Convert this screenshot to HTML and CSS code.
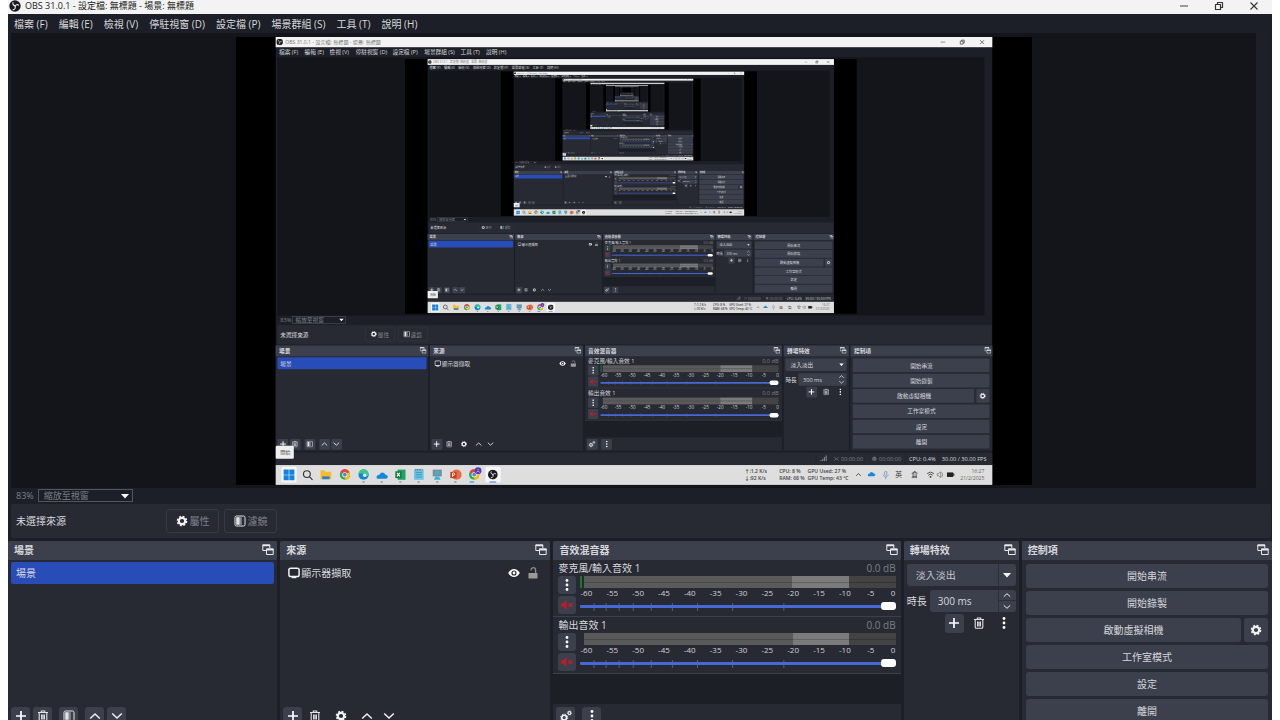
FILE: index.html
```
<!DOCTYPE html>
<html lang="zh-Hant">
<head>
    <meta charset="UTF-8">
    <meta name="viewport" content="width=device-width, initial-scale=1.0">
    <title>OBS 31.0.1</title>
    <link rel="stylesheet" href="styles.css">
</head>
<body>
    <!-- Iconos compartidos -->
    <svg class="sprite" aria-hidden="true">
        <symbol id="i-obs" viewBox="0 0 12 12">
            <circle cx="6" cy="6" r="5.7" fill="#1b1b1f"/>
            <g fill="none" stroke="#e8e8ea" stroke-width="1.1">
                <path d="M4.2 2.2a2.2 2.2 0 0 0 2.2 3.4"/>
                <path d="M9.9 5.4a2.2 2.2 0 0 0-3.8 1.2"/>
                <path d="M3.7 9.6a2.2 2.2 0 0 0 2-3.7"/>
            </g>
        </symbol>
        <symbol id="i-min" viewBox="0 0 12 12"><path d="M2 6h8" stroke="#444" fill="none"/></symbol>
        <symbol id="i-restore" viewBox="0 0 12 12">
            <path d="M2.5 4.5h5v5h-5zM4.5 4V2.5h5v5H8" stroke="#333" stroke-width="1.2" fill="none" stroke-linejoin="round"/>
        </symbol>
        <symbol id="i-close" viewBox="0 0 12 12"><path d="M2.5 2.5l7 7M9.5 2.5l-7 7" stroke="#333" stroke-width="1.1" fill="none"/></symbol>
        <symbol id="i-float" viewBox="0 0 12 12">
            <path d="M4 6.5H.8V1h7v3" stroke="#e6e7ea" fill="none"/>
            <path d="M.5 1.3h7.6M4.2 5.5h7.3" stroke="#e6e7ea" stroke-width="1.8"/>
            <path d="M4.5 5h6.7v5.5H4.5z" stroke="#e6e7ea" fill="none"/>
        </symbol>
        <symbol id="i-plus" viewBox="0 0 12 12"><path d="M6 1v10M1 6h10" stroke="#fff" stroke-width="1.7" fill="none"/></symbol>
        <symbol id="i-trash" viewBox="0 0 12 12">
            <path d="M1 2.5h10M4.3 2V1h3.4v1M2.2 3v7.2q0 1 1 1h5.6q1 0 1-1V3M4.6 4.5v5M6 4.5v5M7.4 4.5v5" stroke="#e2e3e6" stroke-width="1.1" fill="none"/>
        </symbol>
        <symbol id="i-filter" viewBox="0 0 12 12">
            <rect x="1" y="1" width="10" height="10" rx="1.5" fill="none" stroke="#e2e3e6"/>
            <path d="M2.2 2.2h3.6v7.6H2.2z" fill="#e2e3e6"/>
            <path d="M5.8 2.2h2v7.6h-2z" fill="#85888f"/>
        </symbol>
        <symbol id="i-up" viewBox="0 0 12 12"><path d="M1.2 8.5L6 4l4.8 4.5" stroke="#f0f0f2" stroke-width="1.5" fill="none"/></symbol>
        <symbol id="i-down" viewBox="0 0 12 12"><path d="M1.2 3.5L6 8l4.8-4.5" stroke="#f0f0f2" stroke-width="1.5" fill="none"/></symbol>
        <symbol id="i-arrow" viewBox="0 0 12 12"><path d="M2 4h8L6 8.5z" fill="#fff"/></symbol>
        <symbol id="i-dots" viewBox="0 0 12 12">
            <circle cx="6" cy="1.5" r="1.4" fill="#fff"/><circle cx="6" cy="6" r="1.4" fill="#fff"/><circle cx="6" cy="10.5" r="1.4" fill="#fff"/>
        </symbol>
        <symbol id="i-gear" viewBox="0 0 12 12">
            <circle cx="6" cy="6" r="3.2" fill="none" stroke="#f2f2f4" stroke-width="2.2"/>
            <circle cx="6" cy="6" r="4.6" fill="none" stroke="#f2f2f4" stroke-width="1.4" stroke-dasharray="2 1.61"/>
        </symbol>
        <symbol id="i-gears" viewBox="0 0 12 12">
            <circle cx="4.2" cy="7.6" r="2.4" fill="none" stroke="#f2f2f4" stroke-width="1.6"/>
            <circle cx="4.2" cy="7.6" r="3.5" fill="none" stroke="#f2f2f4" stroke-dasharray="1.4 1.35"/>
            <circle cx="9.4" cy="3" r="1.4" fill="none" stroke="#f2f2f4" stroke-width="1.1"/>
            <circle cx="9.4" cy="3" r="2.1" fill="none" stroke="#f2f2f4" stroke-width=".7" stroke-dasharray=".9 .75"/>
        </symbol>
        <symbol id="i-screen" viewBox="0 0 12 12">
            <rect x=".9" y="1.2" width="10.2" height="8.3" rx="1.8" fill="none" stroke="#f2f2f4" stroke-width="1.5"/>
            <path d="M3.6 9.5h4.8v1.7H3.6z" fill="#f2f2f4"/>
        </symbol>
        <symbol id="i-eye" viewBox="0 0 12 12">
            <path d="M.2 6Q2.6 2 6 2t5.8 4Q9.4 10 6 10T.2 6z" fill="#fff"/>
            <circle cx="6" cy="6" r="2.6" fill="#272a33"/><circle cx="6" cy="6" r="1.4" fill="#fff"/>
        </symbol>
        <symbol id="i-lock" viewBox="0 0 12 12">
            <path d="M1.5 6h9v5.5h-9z" fill="#9a9a96"/>
            <path d="M4 3.6V3a2.3 2.3 0 0 1 4.6 0v3" fill="none" stroke="#8d8d8a" stroke-width="1.3"/>
        </symbol>
        <symbol id="i-mute" viewBox="0 0 12 12">
            <path d="M.3 4.2h2L5.4 1v10L2.3 7.8h-2z" fill="#c01c28"/>
            <path d="M7.6 4.2l3.6 3.6M11.2 4.2L7.6 7.8" stroke="#c01c28" stroke-width="1.5"/>
        </symbol>
    </svg>

    <div class="window">
        <header class="titlebar">
            <svg class="icon"><use href="#i-obs"/></svg>
            <h1>OBS 31.0.1 - 設定檔: 無標題 - 場景: 無標題</h1>
            <div class="window-buttons">
                <button aria-label="最小化"><svg class="icon"><use href="#i-min"/></svg></button>
                <button aria-label="還原"><svg class="icon"><use href="#i-restore"/></svg></button>
                <button aria-label="關閉"><svg class="icon"><use href="#i-close"/></svg></button>
            </div>
        </header>

        <nav class="menubar">
            <button>檔案 (F)</button>
            <button>編輯 (E)</button>
            <button>檢視 (V)</button>
            <button>停駐視窗 (D)</button>
            <button>設定檔 (P)</button>
            <button>場景群組 (S)</button>
            <button>工具 (T)</button>
            <button>說明 (H)</button>
        </nav>

        <main class="preview">
            <svg class="canvas" viewBox="-70 0 1404 790" role="img" aria-label="顯示器擷取">
                <defs>
                    <g id="m-channel">
                        <rect x="551" y="579" width="18" height="18" rx="2" fill="#3c404d"/>
                        <rect x="551" y="599" width="18" height="18" rx="2" fill="#3c404d"/>
                        <use href="#i-dots" x="554" y="582" width="12" height="12"/>
                        <use href="#i-mute" x="554" y="602" width="12" height="12"/>
                        <rect x="577" y="579" width="207" height="12" fill="#5a5a5a"/>
                        <rect x="784" y="579" width="57" height="12" fill="#7b7b7b"/>
                        <rect x="841" y="579" width="46" height="12" fill="#434343"/>
                        <path d="M577 585h310" stroke="#484848"/>
                        <g class="m-scale">
                            <text x="579" y="599">-60</text><text x="604" y="599">-55</text><text x="629" y="599">-50</text>
                            <text x="655" y="599">-45</text><text x="681" y="599">-40</text><text x="706" y="599">-35</text>
                            <text x="732" y="599">-30</text><text x="758" y="599">-25</text><text x="784" y="599">-20</text>
                            <text x="809" y="599">-15</text><text x="835" y="599">-10</text><text x="861" y="599">-5</text>
                            <text x="885" y="599">0</text>
                        </g>
                        <path d="M587 606v8M599 606v8M612 606v8M626 606v8M644 606v8M665 606v8M690 606v8M725 606v8M776 606v8" stroke="#4a4e5a"/>
                        <path d="M573 610h300" stroke="#4668d8" stroke-width="3"/>
                        <rect x="871" y="606" width="16" height="8" rx="4" fill="#fff"/>
                        <text class="m-dim" x="858" y="575">0.0 dB</text>
                        <path d="M546 619h347" stroke="#3c404d"/>
                    </g>

                    <g id="m-desktop">
                        <rect x="-70" width="1404" height="790" fill="#000"/>
                        <rect width="1264" height="790" fill="#1c1f27"/>
                        <rect width="1264" height="18" fill="#f3f3f3"/>
                        <use href="#i-obs" x="1" y="3" width="12" height="12"/>
                        <text class="m-title" x="17" y="12">OBS 31.0.1 - 設定檔: 無標題 - 場景: 無標題</text>
                        <use href="#i-min" x="1171" y="3" width="12" height="12"/>
                        <use href="#i-restore" x="1205" y="3" width="12" height="12"/>
                        <use href="#i-close" x="1240" y="3" width="12" height="12"/>
                        <g class="m-text">
                            <text x="6" y="30">檔案 (F)</text><text x="51" y="30">編輯 (E)</text>
                            <text x="95" y="30">檢視 (V)</text><text x="141" y="30">停駐視窗 (D)</text>
                            <text x="206" y="30">設定檔 (P)</text><text x="262" y="30">場景群組 (S)</text>
                            <text x="326" y="30">工具 (T)</text><text x="371" y="30">說明 (H)</text>
                        </g>
                        <rect x="3" y="36" width="1247" height="455" fill="#14151a"/>
                        <rect x="228" y="39" width="796" height="449" fill="#000"/>
                        <text class="m-dim" x="8" y="503">83%</text>
                        <rect x="30" y="493" width="93" height="12" fill="none" stroke="#505564"/>
                        <text class="m-dim" x="35" y="503">縮放至視窗</text>
                        <use href="#i-arrow" x="110" y="493" width="12" height="12"/>

                        <!-- Barra de fuente -->
                        <rect x="3" y="508" width="1260" height="34" fill="#272a33"/>
                        <text class="m-text" x="8" y="529">未選擇來源</text>
                        <rect x="158" y="513" width="52" height="23" rx="2" fill="none" stroke="#363a45"/>
                        <rect x="216" y="513" width="52" height="23" rx="2" fill="none" stroke="#363a45"/>
                        <use href="#i-gear" x="167" y="518" width="12" height="12"/>
                        <use href="#i-filter" x="225" y="518" width="12" height="12"/>
                        <text class="m-dim" x="180" y="529">屬性</text><text class="m-dim" x="238" y="529">濾鏡</text>

                        <!-- Paneles -->
                        <path d="M0 544h269v186H0zM272 544h270v186H272zM546 544h347v186H546zM896 544h115v186H896zM1014 544h250v186h-250z" fill="#272a33"/>
                        <path d="M0 544h269v19H0zM272 544h270v19H272zM546 544h347v19H546zM896 544h115v19H896zM1014 544h250v19h-250z" fill="#3c404d"/>
                        <g class="m-text m-bold">
                            <text x="6" y="558">場景</text><text x="278" y="558">來源</text><text x="551" y="558">音效混音器</text>
                            <text x="902" y="558">轉場特效</text><text x="1020" y="558">控制項</text>
                        </g>
                        <use href="#i-float" x="254" y="547" width="12" height="12"/>
                        <use href="#i-float" x="527" y="547" width="12" height="12"/>
                        <use href="#i-float" x="878" y="547" width="12" height="12"/>
                        <use href="#i-float" x="995" y="547" width="12" height="12"/>
                        <use href="#i-float" x="1250" y="547" width="12" height="12"/>
                        <rect x="3" y="565" width="263" height="21" rx="2" fill="#284cb8"/>
                        <text class="m-text" x="8" y="580">場景</text>
                        <use href="#i-screen" x="280" y="570" width="12" height="12"/>
                        <text class="m-text" x="293" y="580">顯示器擷取</text>
                        <use href="#i-eye" x="500" y="570" width="12" height="12"/>
                        <use href="#i-lock" x="519" y="570" width="12" height="12"/>

                        <text class="m-text" x="551" y="575">麥克風/輸入音效 1</text>
                        <rect x="573" y="579" width="2" height="12" fill="#1b7a22"/>
                        <use href="#m-channel"/>
                        <text class="m-text" x="551" y="632">輸出音效 1</text>
                        <use href="#m-channel" y="57"/>
                        <rect x="546" y="677" width="347" height="29" fill="#1c1f26"/>

                        <g fill="#3c404d">
                            <rect x="899" y="567" width="108" height="22" rx="2"/>
                            <rect x="922" y="593" width="85" height="22" rx="2"/>
                            <rect x="936" y="617" width="19" height="19" rx="2"/>
                            <rect x="1018" y="567" width="241" height="24" rx="2"/>
                            <rect x="1018" y="594" width="241" height="24" rx="2"/>
                            <rect x="1018" y="621" width="214" height="24" rx="2"/>
                            <rect x="1236" y="621" width="23" height="24" rx="2"/>
                            <rect x="1018" y="648" width="241" height="24" rx="2"/>
                            <rect x="1018" y="675" width="241" height="24" rx="2"/>
                            <rect x="1018" y="702" width="241" height="24" rx="2"/>
                            <rect x="3" y="709" width="19" height="19" rx="2"/>
                            <rect x="25" y="709" width="19" height="19" rx="2"/>
                            <rect x="51" y="709" width="19" height="19" rx="2"/>
                            <rect x="77" y="709" width="19" height="19" rx="2"/>
                            <rect x="98" y="709" width="19" height="19" rx="2"/>
                            <rect x="275" y="709" width="19" height="19" rx="2"/>
                            <rect x="549" y="709" width="19" height="19" rx="2"/>
                            <rect x="574" y="709" width="19" height="19" rx="2"/>
                        </g>
                        <text class="m-text" x="908" y="582">淡入淡出</text>
                        <text class="m-text" x="899" y="608">時長</text>
                        <text class="m-text" x="930" y="608">300 ms</text>
                        <use href="#i-arrow" x="992" y="572" width="12" height="12"/>
                        <use href="#i-up" x="993" y="594" width="10" height="10"/>
                        <use href="#i-down" x="993" y="604" width="10" height="10"/>
                        <use href="#i-plus" x="939" y="620" width="12" height="12"/>
                        <use href="#i-trash" x="965" y="620" width="12" height="12"/>
                        <use href="#i-dots" x="990" y="620" width="12" height="12"/>
                        <g class="m-text m-center">
                            <text x="1139" y="583">開始串流</text><text x="1139" y="610">開始錄製</text>
                            <text x="1126" y="637">啟動虛擬相機</text><text x="1139" y="664">工作室模式</text>
                            <text x="1139" y="691">設定</text><text x="1139" y="718">離開</text>
                        </g>
                        <use href="#i-gear" x="1241" y="627" width="12" height="12"/>
                        <use href="#i-plus" x="7" y="712" width="12" height="12"/>
                        <use href="#i-trash" x="28" y="712" width="12" height="12"/>
                        <use href="#i-filter" x="54" y="712" width="12" height="12"/>
                        <use href="#i-up" x="80" y="712" width="12" height="12"/>
                        <use href="#i-down" x="101" y="712" width="12" height="12"/>
                        <use href="#i-plus" x="278" y="712" width="12" height="12"/>
                        <use href="#i-trash" x="300" y="712" width="12" height="12"/>
                        <use href="#i-gear" x="326" y="712" width="12" height="12"/>
                        <use href="#i-up" x="352" y="712" width="12" height="12"/>
                        <use href="#i-down" x="373" y="712" width="12" height="12"/>
                        <use href="#i-gears" x="552" y="712" width="12" height="12"/>
                        <use href="#i-dots" x="578" y="712" width="12" height="12"/>

                        <!-- Barra de estado -->
                        <rect x="0" y="733" width="1264" height="22" fill="#272a33"/>
                        <path d="M962 748v-2M965 748v-4M968 748v-7M971 748v-10" stroke="#7d8088" stroke-width="2"/>
                        <path d="M985 741l4 3-4 3M993 741l-4 3 4 3" stroke="#7d8088" fill="none"/>
                        <text class="m-dim" x="997" y="748">00:00:00</text>
                        <circle cx="1056" cy="744" r="4" fill="#62656d"/>
                        <text class="m-dim" x="1064" y="748">00:00:00</text>
                        <text class="m-text" x="1117" y="748">CPU: 0.4%</text>
                        <text class="m-text" x="1175" y="748">30.00 / 30.00 FPS</text>
                        <path d="M953 735v18M1038 735v18M1110 735v18M1168 735v18" stroke="#1c1f27"/>

                        <!-- Barra de tareas -->
                        <rect y="755" width="1264" height="35" fill="#dedede"/>
                        <rect x="10" y="758" width="27" height="28" rx="3" fill="#f6f6f6"/>
                        <rect x="370" y="758" width="27" height="28" rx="3" fill="#f6f6f6"/>
                        <path d="M14 763h9v9h-9zM24 763h9v9h-9zM14 773h9v9h-9zM24 773h9v9h-9z" fill="#1583dc"/>
                        <circle cx="55" cy="771" r="6" fill="none" stroke="#333" stroke-width="2"/>
                        <path d="M59 775l6 6" stroke="#333" stroke-width="2"/>
                        <path d="M79 764h7l2 3h10v13H79z" fill="#f5bd2c"/><path d="M82 775h13v5H82z" fill="#2b7cd3"/>
                        <g id="m-chrome">
                            <circle cx="122" cy="772" r="9" fill="#34a853"/>
                            <path d="M122 772l8-5a9 9 0 0 1-8 14z" fill="#fbbc05"/>
                            <path d="M122 772l-8-5a9 9 0 0 1 16 0z" fill="#ea4335"/>
                            <circle cx="122" cy="772" r="4.5" fill="#fff"/><circle cx="122" cy="772" r="3.3" fill="#4285f4"/>
                        </g>
                        <circle cx="155" cy="772" r="9" fill="#1683d4"/>
                        <path d="M146 771a9 9 0 0 1 18 1q-1 4-6 3-1-6-7-5z" fill="#39c78f"/>
                        <circle cx="157" cy="773" r="3" fill="#e4f3fa"/>
                        <path id="m-cloud" d="M180 779q-3-1-2-4 1-3 5-3 3-6 8-3l3 3q4 1 4 4-1 3-4 3z" fill="#1488db"/>
                        <path d="M215 763h14v18h-14z" fill="#21a366"/><path d="M211 766h11v12h-11z" fill="#107c41"/>
                        <path d="M214 769l5 6M219 769l-5 6" stroke="#fff" stroke-width="2"/>
                        <path d="M244 763h17v18h-17z" fill="#6bc4e3"/><path d="M247 768h11M247 772h11M247 776h11" stroke="#247c9e"/>
                        <path d="M246 763h13" stroke="#5d6f78" stroke-width="2" stroke-dasharray="2 1"/>
                        <path d="M277 763h16v12h-16z" fill="#7e8c94"/><path d="M281 766h8v6h-8zM282 775h6l3 6h-12z" fill="#38b4da"/>
                        <circle cx="319" cy="772" r="9" fill="#e86c46"/><path d="M308 767h11v11h-11z" fill="#c43e1c"/>
                        <path d="M312 776v-7h3q2 2 0 4h-3" stroke="#fff" stroke-width="1.4" fill="none"/>
                        <use href="#m-chrome" x="228"/>
                        <circle cx="357" cy="765" r="6" fill="#553bb3"/><path d="M354 768q3-5 6 0M357 762v2" stroke="#fff" fill="none"/>
                        <use href="#i-obs" x="374" y="763" width="18" height="18"/>
                        <path d="M153 785h4M185 785h4M218 785h4M250 785h4M283 785h4M315 785h4" stroke="#777" stroke-width="2"/>
                        <path d="M342 785h8M377 785h12" stroke="#2a7de1" stroke-width="2"/>
                        <g class="m-tray">
                            <text x="827" y="769">↑:</text><text x="827" y="782">↓:</text>
                            <text x="838" y="769">1.2 K/s</text><text x="838" y="782">92 K/s</text>
                            <text x="888" y="769">CPU: 8 %</text><text x="888" y="782">RAM: 68 %</text>
                            <text x="938" y="769">GPU Used: 27 %</text><text x="938" y="782">GPU Temp: 43 °C</text>
                        </g>
                        <path d="M1024 774l4-4 4 4" stroke="#333" stroke-width="1.4" fill="none"/>
                        <use href="#m-cloud" transform="translate(927 242) scale(.66 .66)" y="28"/>
                        <path d="M1074 767v5q2 3 4 0v-5q-2-2-4 0zM1071 772q5 8 10 0M1076 776v4" stroke="#5277b5" fill="none"/>
                        <text class="m-tray-cjk" x="1093" y="776">英</text><text class="m-tray-cjk" x="1121" y="776">倉</text>
                        <path d="M1149 770q6-5 12 0M1151 773q4-4 8 0" stroke="#333" stroke-width="1.4" fill="none"/><circle cx="1155" cy="776" r="1.6" fill="#333"/>
                        <path d="M1167 770h2l4-3v10l-4-3h-2zM1175 768q3 4 0 8" stroke="#555" fill="none"/>
                        <path d="M1184 768h11v8h-11z" fill="#222"/><path d="M1196 770v4" stroke="#222" stroke-width="2"/>
                        <text class="m-clock" x="1250" y="769">16:27</text><text class="m-clock" x="1250" y="782">21/2/2025</text>
                        <rect x="0" y="721" width="32" height="23" rx="2" fill="#efefef"/>
                        <text class="m-tip" x="8" y="736">開始</text>
                    </g>
                </defs>

                <!-- La captura se contiene a sí misma -->
                <use href="#m-desktop"/>
                <g transform="translate(268 39) scale(.567)">
                    <use href="#m-desktop"/>
                    <g transform="translate(268 39) scale(.567)">
                        <use href="#m-desktop"/>
                        <g transform="translate(268 39) scale(.567)">
                            <use href="#m-desktop"/>
                            <g transform="translate(268 39) scale(.567)">
                                <use href="#m-desktop"/>
                                <g transform="translate(268 39) scale(.567)">
                                    <use href="#m-desktop"/>
                                    <g transform="translate(268 39) scale(.567)">
                                        <use href="#m-desktop"/>
                                        <g transform="translate(268 39) scale(.567)">
                                            <use href="#m-desktop"/>
                                        </g>
                                    </g>
                                </g>
                            </g>
                        </g>
                    </g>
                </g>
            </svg>
            <div class="scroll-strip"></div>
        </main>

        <div class="zoom-row">
            <label for="zoom">83%</label>
            <div class="select-box zoom-box">
                <select id="zoom"><option>縮放至視窗</option></select>
                <svg class="icon"><use href="#i-arrow"/></svg>
            </div>
        </div>

        <div class="source-bar">
            <span class="source-name">未選擇來源</span>
            <button class="ghost"><svg class="icon"><use href="#i-gear"/></svg>屬性</button>
            <button class="ghost"><svg class="icon"><use href="#i-filter"/></svg>濾鏡</button>
        </div>

        <div class="docks">
            <section class="dock">
                <h2>場景<svg class="icon"><use href="#i-float"/></svg></h2>
                <ul class="scene-list">
                    <li class="selected">場景</li>
                </ul>
                <div class="tools">
                    <button class="tool" aria-label="新增場景"><svg class="icon"><use href="#i-plus"/></svg></button>
                    <button class="tool" aria-label="移除場景"><svg class="icon"><use href="#i-trash"/></svg></button>
                    <button class="tool split" aria-label="場景濾鏡"><svg class="icon"><use href="#i-filter"/></svg></button>
                    <button class="tool split" aria-label="上移"><svg class="icon"><use href="#i-up"/></svg></button>
                    <button class="tool" aria-label="下移"><svg class="icon"><use href="#i-down"/></svg></button>
                </div>
            </section>

            <section class="dock">
                <h2>來源<svg class="icon"><use href="#i-float"/></svg></h2>
                <ul class="source-list">
                    <li>
                        <svg class="icon"><use href="#i-screen"/></svg>
                        <span>顯示器擷取</span>
                        <button class="bare" aria-label="顯示"><svg class="icon"><use href="#i-eye"/></svg></button>
                        <button class="bare" aria-label="鎖定"><svg class="icon"><use href="#i-lock"/></svg></button>
                    </li>
                </ul>
                <div class="tools">
                    <button class="tool" aria-label="新增來源"><svg class="icon"><use href="#i-plus"/></svg></button>
                    <button class="tool flat" aria-label="移除來源"><svg class="icon"><use href="#i-trash"/></svg></button>
                    <button class="tool flat split" aria-label="來源屬性"><svg class="icon"><use href="#i-gear"/></svg></button>
                    <button class="tool flat split" aria-label="上移"><svg class="icon"><use href="#i-up"/></svg></button>
                    <button class="tool flat" aria-label="下移"><svg class="icon"><use href="#i-down"/></svg></button>
                </div>
            </section>

            <section class="dock">
                <h2>音效混音器<svg class="icon"><use href="#i-float"/></svg></h2>
                <div class="channel">
                    <div class="channel-name"><label for="mic">麥克風/輸入音效 1</label><span>0.0 dB</span></div>
                    <div class="channel-body">
                        <div class="channel-buttons">
                            <button class="tool" aria-label="選項"><svg class="icon"><use href="#i-dots"/></svg></button>
                            <button class="tool" aria-label="靜音"><svg class="icon"><use href="#i-mute"/></svg></button>
                        </div>
                        <div class="levels">
                            <div class="meter active"></div>
                            <div class="scale"><span>-60</span><span>-55</span><span>-50</span><span>-45</span><span>-40</span><span>-35</span><span>-30</span><span>-25</span><span>-20</span><span>-15</span><span>-10</span><span>-5</span><span>0</span></div>
                            <div class="fader">
                                <svg class="ticks" viewBox="0 0 314 8" preserveAspectRatio="none"><path d="M14 0v8M26 0v8M39 0v8M53 0v8M71 0v8M92 0v8M117 0v8M152 0v8M203 0v8"/></svg>
                                <input type="range" id="mic" min="0" max="100" value="100">
                            </div>
                        </div>
                    </div>
                </div>
                <div class="channel">
                    <div class="channel-name"><label for="output">輸出音效 1</label><span>0.0 dB</span></div>
                    <div class="channel-body">
                        <div class="channel-buttons">
                            <button class="tool" aria-label="選項"><svg class="icon"><use href="#i-dots"/></svg></button>
                            <button class="tool" aria-label="靜音"><svg class="icon"><use href="#i-mute"/></svg></button>
                        </div>
                        <div class="levels">
                            <div class="meter"></div>
                            <div class="scale"><span>-60</span><span>-55</span><span>-50</span><span>-45</span><span>-40</span><span>-35</span><span>-30</span><span>-25</span><span>-20</span><span>-15</span><span>-10</span><span>-5</span><span>0</span></div>
                            <div class="fader">
                                <svg class="ticks" viewBox="0 0 314 8" preserveAspectRatio="none"><path d="M14 0v8M26 0v8M39 0v8M53 0v8M71 0v8M92 0v8M117 0v8M152 0v8M203 0v8"/></svg>
                                <input type="range" id="output" min="0" max="100" value="100">
                            </div>
                        </div>
                    </div>
                </div>
                <div class="mixer-empty"></div>
                <div class="tools">
                    <button class="tool" aria-label="進階音效屬性"><svg class="icon"><use href="#i-gears"/></svg></button>
                    <button class="tool split" aria-label="混音器選單"><svg class="icon"><use href="#i-dots"/></svg></button>
                </div>
            </section>

            <section class="dock">
                <h2>轉場特效<svg class="icon"><use href="#i-float"/></svg></h2>
                <div class="transitions">
                    <div class="select-box transition-box">
                        <select aria-label="轉場特效"><option>淡入淡出</option></select>
                        <svg class="icon"><use href="#i-arrow"/></svg>
                    </div>
                    <div class="duration">
                        <label for="duration">時長</label>
                        <div class="spin">
                            <input type="text" id="duration" value="300 ms">
                            <div class="spin-buttons">
                                <button aria-label="增加"><svg class="icon"><use href="#i-up"/></svg></button>
                                <button aria-label="減少"><svg class="icon"><use href="#i-down"/></svg></button>
                            </div>
                        </div>
                    </div>
                    <div class="transition-tools">
                        <button class="tool" aria-label="新增轉場"><svg class="icon"><use href="#i-plus"/></svg></button>
                        <button class="tool flat" aria-label="移除轉場"><svg class="icon"><use href="#i-trash"/></svg></button>
                        <button class="tool flat" aria-label="轉場選項"><svg class="icon"><use href="#i-dots"/></svg></button>
                    </div>
                </div>
            </section>

            <section class="dock">
                <h2>控制項<svg class="icon"><use href="#i-float"/></svg></h2>
                <div class="controls">
                    <button>開始串流</button>
                    <button>開始錄製</button>
                    <div class="camera">
                        <button>啟動虛擬相機</button>
                        <button class="camera-settings" aria-label="虛擬相機設定"><svg class="icon"><use href="#i-gear"/></svg></button>
                    </div>
                    <button>工作室模式</button>
                    <button>設定</button>
                    <button>離開</button>
                </div>
            </section>
        </div>
    </div>
</body>
</html>
```

FILE: styles.css
```
* {
    box-sizing: border-box;
}

body {
    margin: 0;
    padding: 0 8px;
    height: 100vh;
    overflow: hidden;
    background-color: #fff;
    color: #d8d9dd;
    font-family: "Open Sans", "Noto Sans CJK TC", sans-serif;
    font-size: 10px;
    line-height: 14px;
}

button, input, select {
    margin: 0;
    padding: 0;
    border: none;
    background: none;
    color: inherit;
    font: inherit;
}

.sprite {
    position: absolute;
    width: 0;
    height: 0;
}

.icon {
    display: block;
    flex: none;
    width: 12px;
    height: 12px;
}

.window {
    background-color: #1c1f27;
}

/* Barra de título */
.titlebar {
    display: flex;
    align-items: center;
    height: 14px;
    padding: 0 12px 2px 1px;
    background-color: #f3f3f3;
    color: #222;
}

.titlebar h1 {
    flex: 1;
    margin: 0 0 0 4px;
    font-size: 9px;
    line-height: 12px;
    font-weight: 400;
}

.window-buttons {
    display: flex;
    gap: 23px;
}

.menubar {
    display: flex;
    gap: 11px;
    height: 19px;
    padding: 0 6px;
}

/* Vista previa */
.preview {
    display: flex;
    align-items: flex-start;
    margin: 0 3px;
    background-color: #14151a;
}

.canvas {
    display: block;
    flex: 0 1 796px;
    min-width: 0;
    margin: 4px auto 3px;
    background-color: #000;
}

.scroll-strip {
    align-self: stretch;
    flex: none;
    width: 13px;
    background-color: #1d2027;
}

.m-text, .m-dim {
    font-size: 10px;
    fill: #d8d9dd;
}

.m-dim {
    fill: #7d8088;
}

.m-bold {
    font-weight: 700;
}

.m-center {
    text-anchor: middle;
}

.m-scale {
    font-size: 8px;
    text-anchor: middle;
    fill: #d0d1d5;
}

.m-title {
    font-size: 9px;
    fill: #777;
}

.m-tray {
    font-size: 9px;
    font-weight: 600;
    fill: #444;
}

.m-tray-cjk {
    font-size: 12px;
    fill: #333;
}

.m-clock {
    font-size: 9px;
    text-anchor: end;
    fill: #666;
}

.m-tip {
    font-size: 9px;
    fill: #555;
}

.select-box {
    position: relative;
}

.select-box select {
    display: block;
    width: 100%;
    height: 100%;
    appearance: none;
}

.select-box .icon {
    position: absolute;
    top: 0;
    bottom: 0;
    margin: auto 0;
    pointer-events: none;
}

.zoom-row {
    display: flex;
    align-items: center;
    gap: 4px;
    height: 16px;
    padding-left: 8px;
    color: #7d8088;
    font-size: 9px;
}

.zoom-box {
    width: 95px;
    height: 13px;
    border: 1px solid #505564;
    line-height: 11px;
}

.zoom-box select {
    padding-left: 5px;
}

.zoom-box .icon {
    right: 1px;
}

.source-bar {
    display: flex;
    align-items: center;
    gap: 5px;
    height: 34px;
    margin: 0 1px 3px 3px;
    padding-left: 5px;
    border-radius: 2px;
    background-color: #272a33;
}

.source-name {
    width: 145px;
}

.ghost {
    display: flex;
    align-items: center;
    justify-content: center;
    gap: 2px;
    width: 53px;
    height: 24px;
    border: 1px solid #363a45;
    border-radius: 3px;
    color: #7d8088;
}

/* Paneles */
.docks {
    display: grid;
    grid-template-columns: 269fr 270fr 347fr 115fr 250fr;
    gap: 3px;
}

.dock {
    display: flex;
    flex-direction: column;
    min-width: 0;
    min-height: 192px;
    background-color: #272a33;
}

.dock h2 {
    display: flex;
    align-items: center;
    justify-content: space-between;
    height: 19px;
    margin: 0;
    padding: 0 3px 0 6px;
    border-radius: 2px 2px 0 0;
    background-color: #3c404d;
    font-size: 10px;
    font-weight: 700;
}

.scene-list, .source-list {
    flex: 1;
    margin: 0;
    padding: 2px 3px;
    list-style: none;
}

.scene-list li, .source-list li {
    display: flex;
    align-items: center;
    height: 22px;
    padding: 0 5px;
    border-radius: 2px;
}

.scene-list .selected {
    background-color: #284cb8;
}

.source-list li {
    gap: 1px;
    padding-right: 8px;
}

.source-list span {
    flex: 1;
}

.bare + .bare {
    margin-left: 6px;
}

.tools {
    display: flex;
    gap: 3px;
    padding: 3px 3px 7px;
}

.tool {
    display: flex;
    align-items: center;
    justify-content: center;
    width: 19px;
    height: 19px;
    border-radius: 3px;
    background-color: #3c404d;
}

.tool.split {
    margin-left: 4px;
}

.tool.flat {
    background-color: transparent;
}

/* Mezclador */
.channel {
    height: 57px;
    padding: 1px 5px 0;
    border-bottom: 1px solid #3c404d;
}

.channel-name {
    display: flex;
    justify-content: space-between;
}

.channel-name span {
    color: #7d8088;
}

.channel-body {
    display: flex;
    gap: 4px;
}

.channel-buttons {
    display: flex;
    flex-direction: column;
    gap: 2px;
    padding-top: 1px;
}

.channel .tool {
    width: 18px;
    height: 18px;
}

.levels {
    flex: 1;
    min-width: 0;
}

.meter {
    height: 12px;
    margin: 1px 0 0 4px;
    background: linear-gradient(transparent 6px, #00000033 6px, #00000033 7px, transparent 7px),
        linear-gradient(90deg, #5a5a5a 67%, #7b7b7b 67%, #7b7b7b 85%, #434343 85%);
}

.meter.active {
    margin-left: 0;
    border-left: 2px solid #1b7a22;
    padding-left: 2px;
    background-clip: content-box;
}

.scale {
    display: flex;
    justify-content: space-between;
    font-size: 8px;
    line-height: 10px;
    color: #d0d1d5;
}

.scale span {
    width: 12px;
    text-align: center;
}

.scale span:last-child {
    width: 5px;
}

.fader {
    position: relative;
    height: 8px;
    margin-top: 5px;
}

.ticks {
    position: absolute;
    width: 100%;
    height: 8px;
    stroke: #5a5e6a;
}

.fader input {
    position: absolute;
    display: block;
    width: 100%;
    height: 8px;
    appearance: none;
}

.fader input::-webkit-slider-runnable-track {
    height: 3px;
    border-radius: 1px;
    background-color: #4668d8;
}

.fader input::-webkit-slider-thumb {
    width: 15px;
    height: 8px;
    margin-top: -3px;
    border-radius: 3px;
    background-color: #fff;
    appearance: none;
}

.mixer-empty {
    flex: 1;
    background-color: #1c1f26;
}

/* Transiciones */
.transitions {
    display: flex;
    flex-direction: column;
    gap: 4px;
    padding: 4px 3px;
}

.transition-box {
    height: 22px;
    border-radius: 3px;
    background-color: #3c404d;
}

.transition-box select {
    padding-left: 9px;
    color: #c5c7cc;
}

.transition-box .icon {
    right: 3px;
}

.transition-box::after {
    content: "";
    position: absolute;
    top: 0;
    right: 17px;
    width: 1px;
    height: 22px;
    background-color: #2c303a;
}

.duration {
    display: flex;
    align-items: center;
    gap: 3px;
}

.duration label {
    flex: none;
}

.spin {
    display: flex;
    flex: 1;
    min-width: 0;
    height: 22px;
    border-radius: 3px;
    background-color: #3c404d;
}

.spin input {
    flex: 1;
    min-width: 0;
    padding-left: 8px;
}

.spin-buttons {
    display: flex;
    flex-direction: column;
    width: 18px;
    border-left: 1px solid #2c303a;
}

.spin-buttons button {
    display: flex;
    flex: 1;
    align-items: center;
    justify-content: center;
}

.spin-buttons button + button {
    border-top: 1px solid #2c303a;
}

.spin-buttons .icon {
    width: 8px;
    height: 8px;
}

.transition-tools {
    display: flex;
    justify-content: flex-end;
    gap: 6px;
    margin: -2px 2px 0 0;
}

/* Controles */
.controls {
    display: flex;
    flex-direction: column;
    gap: 3px;
    padding: 4px;
}

.controls button {
    height: 24px;
    border-radius: 3px;
    background-color: #3c404d;
    color: #d5d6da;
}

.camera {
    display: flex;
    gap: 3px;
}

.camera button {
    flex: 1;
}

.camera .camera-settings {
    display: flex;
    flex: none;
    align-items: center;
    justify-content: center;
    width: 24px;
}
```
